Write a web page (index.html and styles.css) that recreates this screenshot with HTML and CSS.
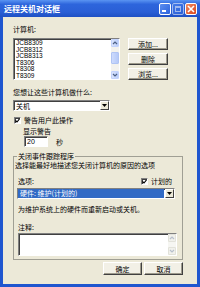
FILE: index.html
```html
<!DOCTYPE html>
<html>
<head>
<meta charset="utf-8">
<link rel="stylesheet" href="styles.css">
</head>
<body>
<div class="window">
  <div class="titlebar">
    <span class="title">远程关机对话框</span>
    <div class="ctrls">
      <div class="tb min"><span class="bar"></span></div>
      <div class="tb max"><span class="sq"></span></div>
      <div class="tb close">
        <svg width="8" height="8" viewBox="0 0 8 8"><path d="M1 1L7 7M7 1L1 7" stroke="#fff" stroke-width="1.6"/></svg>
      </div>
    </div>
  </div>
  <div class="client">
    <div class="lbl first">计算机:</div>
    <div class="listrow">
      <div class="listbox">
        <div class="items">
          <div>JCB8309</div>
          <div>JCB8312</div>
          <div>JCB8313</div>
          <div>T8306</div>
          <div>T8308</div>
          <div>T8309</div>
        </div>
        <div class="vscroll">
          <div class="sbtn"><svg width="6" height="6" viewBox="0 0 6 6"><path d="M1 4L3 2L5 4" fill="none" stroke="#4d6185" stroke-width="1.2"/></svg></div>
          <div class="track"><div class="thumb"></div></div>
          <div class="sbtn"><svg width="6" height="6" viewBox="0 0 6 6"><path d="M1 2L3 4L5 2" fill="none" stroke="#4d6185" stroke-width="1.2"/></svg></div>
        </div>
      </div>
      <div class="btncol">
        <div class="btn">添加...</div>
        <div class="btn">删除</div>
        <div class="btn">浏览...</div>
      </div>
    </div>
    <div class="lbl q">您想让这些计算机做什么:</div>
    <div class="combo act">
      <span class="ctext">关机</span>
      <span class="drop"><svg width="5" height="3" viewBox="0 0 5 3"><path d="M0 0H5L2.5 3Z" fill="#000"/></svg></span>
    </div>
    <div class="chkrow warn">
      <span class="box"><svg width="5" height="5" viewBox="0 0 5 5"><path d="M0.5 2.5L2 4L4.5 0.8" fill="none" stroke="#000" stroke-width="1.1"/></svg></span>
      <span>警告用户此操作</span>
    </div>
    <div class="lbl show">显示警告</div>
    <div class="secrow">
      <div class="field">20</div>
      <span class="sec">秒</span>
    </div>
    <fieldset class="group">
      <legend>关闭事件跟踪程序</legend>
      <div class="desc">选择能最好地描述您关闭计算机的原因的选项</div>
      <div class="optrow">
        <span>选项:</span>
        <div class="chkrow plan">
          <span class="box"><svg width="5" height="5" viewBox="0 0 5 5"><path d="M0.5 2.5L2 4L4.5 0.8" fill="none" stroke="#000" stroke-width="1.1"/></svg></span>
          <span>计划的</span>
        </div>
      </div>
      <div class="combo sel">
        <span class="ctext">硬件: 维护(计划的)</span>
        <span class="drop"><svg width="5" height="3" viewBox="0 0 5 3"><path d="M0 0H5L2.5 3Z" fill="#000"/></svg></span>
      </div>
      <div class="note">为维护系统上的硬件而重新启动或关机。</div>
      <div class="lbl cmt">注释:</div>
      <div class="memo">
        <div class="memotext"></div>
        <div class="vscroll dis">
          <div class="sbtn"><svg width="6" height="6" viewBox="0 0 6 6"><path d="M1 4L3 2L5 4" fill="none" stroke="#b8c0cc" stroke-width="1.2"/></svg></div>
          <div class="track"></div>
          <div class="sbtn"><svg width="6" height="6" viewBox="0 0 6 6"><path d="M1 2L3 4L5 2" fill="none" stroke="#b8c0cc" stroke-width="1.2"/></svg></div>
        </div>
      </div>
    </fieldset>
    <div class="okrow">
      <div class="btn ok">确定</div>
      <div class="btn ok">取消</div>
    </div>
  </div>
</div>
</body>
</html>
```
FILE: styles.css
```css
* { box-sizing: border-box; }
html, body { margin: 0; padding: 0; }
body {
  width: 200px;
  height: 287px;
  overflow: hidden;
  font-family: "Noto Sans CJK SC", "Liberation Sans", sans-serif;
  font-size: 7px;
  line-height: 8px;
  color: #000;
}
.window {
  width: 200px;
  height: 287px;
  display: flex;
  flex-direction: column;
  background: #1f56cf;
}
.titlebar {
  height: 17px;
  flex: none;
  display: flex;
  align-items: center;
  padding: 0 3px 0 4px;
  background: linear-gradient(#5a94f2, #2d65dc 25%, #2a5fd6 70%, #1e50c4);
}
.title {
  flex: 1;
  color: #fff;
  font-weight: bold;
  font-size: 8px;
  line-height: 9px;
}
.ctrls { display: flex; gap: 1px; }
.tb {
  width: 12px;
  height: 12px;
  border: 1px solid #fff;
  border-radius: 2px;
  display: flex;
  align-items: center;
  justify-content: center;
  background: linear-gradient(135deg, #5c8ff0, #2c62dc);
}
.tb.min { align-items: flex-end; justify-content: flex-start; padding: 0 0 2px 2px; }
.bar { width: 4px; height: 2px; background: #fff; }
.tb.max { opacity: 0.55; }
.sq { width: 6px; height: 6px; border: 1px solid #fff; border-top-width: 2px; }
.tb.close { background: linear-gradient(135deg, #f08a63, #d9461d); }
.client {
  flex: 1;
  margin: 0 3px 3px;
  background: #ece9d8;
  padding: 8px 14px 0 10px;
  display: flex;
  flex-direction: column;
}
.lbl { height: 8px; }
.listrow { display: flex; margin-top: 5px; }
.listbox {
  width: 107px;
  height: 42px;
  background: #fff;
  border: 1px solid;
  border-color: #808080 #fff #fff #808080;
  box-shadow: inset 1px 1px 0 #404040;
  display: flex;
}
.items {
  flex: 1;
  padding: 1px 0 0 2px;
  font-family: "Liberation Sans", sans-serif;
  font-size: 6.5px;
  line-height: 6.6px;
  overflow: hidden;
}
.vscroll {
  width: 8px;
  display: flex;
  flex-direction: column;
  background: #f4f3ee;
}
.sbtn {
  height: 8px;
  flex: none;
  display: flex;
  align-items: center;
  justify-content: center;
  background: linear-gradient(90deg, #dbe5fd, #b9cdf9);
  border: 1px solid #c3d3fd;
  border-radius: 1px;
}
.track { flex: 1; display: flex; flex-direction: column; justify-content: center; padding: 0 0; }
.thumb {
  height: 12px;
  margin-top: -2px;
  background: linear-gradient(90deg, #cddbfd, #b5c9f8);
  border: 1px solid #b0c4f4;
  border-radius: 1px;
}
.btncol {
  margin-left: 8px;
  display: flex;
  flex-direction: column;
  gap: 3px;
}
.btn {
  width: 40px;
  height: 12px;
  display: flex;
  align-items: center;
  justify-content: center;
  background: #f2f0e6;
  border: 1px solid;
  border-color: #fff #404040 #404040 #fff;
  box-shadow: inset -1px -1px 0 #9d9a8c;
  line-height: 8px;
}
.q { margin-top: 8px; }
.combo {
  height: 11px;
  display: flex;
  align-items: center;
  background: #fff;
  border: 1px solid;
  border-color: #808080 #fff #fff #808080;
  box-shadow: inset 1px 1px 0 #404040;
}
.combo.act { width: 97px; margin-top: 4px; }
.ctext { flex: 1; padding-left: 2px; white-space: nowrap; overflow: hidden; }
.drop {
  width: 9px;
  height: 9px;
  flex: none;
  display: flex;
  align-items: center;
  justify-content: center;
  background: #ece9d8;
  border: 1px solid;
  border-color: #fff #404040 #404040 #fff;
}
.chkrow { display: flex; align-items: center; gap: 3px; height: 8px; }
.warn { margin-top: 5px; padding-left: 1px; }
.box {
  width: 7px;
  height: 7px;
  background: #fff;
  border: 1px solid;
  border-color: #808080 #fff #fff #808080;
  box-shadow: inset 1px 1px 0 #404040;
  display: flex;
  align-items: center;
  justify-content: center;
}
.show { margin-top: 3px; padding-left: 10px; }
.secrow { display: flex; align-items: center; margin-top: 1px; padding-left: 11px; }
.field {
  width: 24px;
  height: 11px;
  background: #fff;
  border: 1px solid;
  border-color: #808080 #fff #fff #808080;
  box-shadow: inset 1px 1px 0 #404040;
  padding-left: 2px;
  font-family: "Liberation Sans", sans-serif;
  font-size: 7px;
  line-height: 9px;
}
.sec { margin-left: 8px; }
.group {
  margin: 5px 0 0;
  padding: 0 4px 3px 4px;
  border: 1px solid #a09f94;
  min-width: 0;
}
.group legend {
  padding: 0 1px;
  margin-left: -1px;
  line-height: 8px;
}
.desc { margin-top: 1px; margin-left: -3px; white-space: nowrap; height: 8px; }
.optrow {
  display: flex;
  justify-content: space-between;
  margin-top: 8px;
  height: 8px;
  padding-right: 6px;
}
.combo.sel {
  width: 158px;
  margin-top: 3px;
  margin-left: -1px;
}
.combo.sel .ctext {
  background: #316ac5;
  color: #fff;
  height: 9px;
  line-height: 9px;
  margin-right: 1px;
}
.note { margin-top: 6px; height: 8px; white-space: nowrap; }
.cmt { margin-top: 10px; }
.memo {
  margin-top: 2px;
  width: 159px;
  height: 23px;
  display: flex;
  background: #fff;
  border: 1px solid;
  border-color: #808080 #fff #fff #808080;
  box-shadow: inset 1px 1px 0 #404040;
}
.memotext { flex: 1; }
.vscroll.dis .sbtn {
  background: #f1f1ec;
  border-color: #e2e2da;
}
.vscroll.dis .track { background: #f6f6f2; }
.okrow {
  display: flex;
  justify-content: flex-end;
  gap: 2px;
  margin-top: 2px;
}
.btn.ok { width: 39px; height: 13px; }
```
